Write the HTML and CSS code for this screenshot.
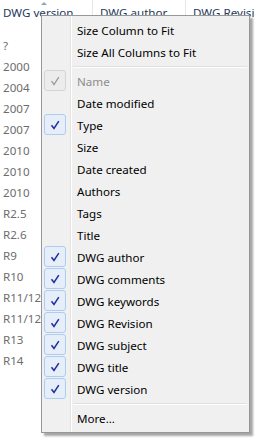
FILE: index.html
```html
<!DOCTYPE html>
<html lang="en">

<head>
  <meta charset="UTF-8">
  <meta name="viewport" content="width=device-width, initial-scale=1.0">
  <title>Column chooser</title>
  <link rel="stylesheet" href="styles.css">
</head>

<body>
  <div class="header">
    <div class="col col-sorted">DWG version<span class="sort-arrow"></span></div>
    <div class="col">DWG author</div>
    <div class="col">DWG Revision</div>
  </div>

  <ul class="rows">
    <li>?</li>
    <li>2000</li>
    <li>2004</li>
    <li>2007</li>
    <li>2007</li>
    <li>2010</li>
    <li>2010</li>
    <li>2010</li>
    <li>R2.5</li>
    <li>R2.6</li>
    <li>R9</li>
    <li>R10</li>
    <li>R11/12</li>
    <li>R11/12</li>
    <li>R13</li>
    <li>R14</li>
  </ul>

  <!-- context menu sits over the list -->
  <div class="menu">
    <div class="item"><span class="gutter"></span><span class="label">Size Column to Fit</span></div>
    <div class="item"><span class="gutter"></span><span class="label">Size All Columns to Fit</span></div>
    <div class="separator"></div>
    <div class="item disabled"><span class="gutter"><span class="check"><svg viewBox="0 0 10 10" width="10" height="10"><path d="M1.5 5.2 L4 8.5 L8.8 1.2" fill="none" stroke="currentColor" stroke-width="1.3"/></svg></span></span><span class="label">Name</span></div>
    <div class="item"><span class="gutter"></span><span class="label">Date modified</span></div>
    <div class="item"><span class="gutter"><span class="check"><svg viewBox="0 0 10 10" width="10" height="10"><path d="M1.5 5.2 L4 8.5 L8.8 1.2" fill="none" stroke="currentColor" stroke-width="1.5"/></svg></span></span><span class="label">Type</span></div>
    <div class="item"><span class="gutter"></span><span class="label">Size</span></div>
    <div class="item"><span class="gutter"></span><span class="label">Date created</span></div>
    <div class="item"><span class="gutter"></span><span class="label">Authors</span></div>
    <div class="item"><span class="gutter"></span><span class="label">Tags</span></div>
    <div class="item"><span class="gutter"></span><span class="label">Title</span></div>
    <div class="item"><span class="gutter"><span class="check"><svg viewBox="0 0 10 10" width="10" height="10"><path d="M1.5 5.2 L4 8.5 L8.8 1.2" fill="none" stroke="currentColor" stroke-width="1.5"/></svg></span></span><span class="label">DWG author</span></div>
    <div class="item"><span class="gutter"><span class="check"><svg viewBox="0 0 10 10" width="10" height="10"><path d="M1.5 5.2 L4 8.5 L8.8 1.2" fill="none" stroke="currentColor" stroke-width="1.5"/></svg></span></span><span class="label">DWG comments</span></div>
    <div class="item"><span class="gutter"><span class="check"><svg viewBox="0 0 10 10" width="10" height="10"><path d="M1.5 5.2 L4 8.5 L8.8 1.2" fill="none" stroke="currentColor" stroke-width="1.5"/></svg></span></span><span class="label">DWG keywords</span></div>
    <div class="item"><span class="gutter"><span class="check"><svg viewBox="0 0 10 10" width="10" height="10"><path d="M1.5 5.2 L4 8.5 L8.8 1.2" fill="none" stroke="currentColor" stroke-width="1.5"/></svg></span></span><span class="label">DWG Revision</span></div>
    <div class="item"><span class="gutter"><span class="check"><svg viewBox="0 0 10 10" width="10" height="10"><path d="M1.5 5.2 L4 8.5 L8.8 1.2" fill="none" stroke="currentColor" stroke-width="1.5"/></svg></span></span><span class="label">DWG subject</span></div>
    <div class="item"><span class="gutter"><span class="check"><svg viewBox="0 0 10 10" width="10" height="10"><path d="M1.5 5.2 L4 8.5 L8.8 1.2" fill="none" stroke="currentColor" stroke-width="1.5"/></svg></span></span><span class="label">DWG title</span></div>
    <div class="item"><span class="gutter"><span class="check"><svg viewBox="0 0 10 10" width="10" height="10"><path d="M1.5 5.2 L4 8.5 L8.8 1.2" fill="none" stroke="currentColor" stroke-width="1.5"/></svg></span></span><span class="label">DWG version</span></div>
    <div class="separator"></div>
    <div class="item"><span class="gutter"></span><span class="label">More...</span></div>
  </div>
</body>

</html>
```

FILE: styles.css
```css
* {
  box-sizing: border-box;
}

body {
  font-family: "Noto Sans", "Open Sans", sans-serif;
  font-size: 11.6px;
  background-color: #ffffff;
  margin: 0;
  overflow: hidden;
}

.header {
  display: flex;
  height: 24px;
}

.header .col {
  position: relative;
  width: 93px;
  flex-shrink: 0;
  padding: 5px 0 0 3px;
  color: #1e395b;
  border-right: 1px solid #e3e8ef;
  white-space: nowrap;
  overflow: hidden;
}

.header .col + .col {
  padding-left: 7px;
}

.header .col:last-child {
  flex: 1;
  border-right: none;
}

.sort-arrow {
  position: absolute;
  top: 2px;
  left: 41px;
  border-left: 3px solid transparent;
  border-right: 3px solid transparent;
  border-bottom: 3px solid #8fa3bd;
}

.rows {
  list-style: none;
  margin: 0;
  padding: 11px 0 0 3px;
}

.rows li {
  height: 21px;
  line-height: 21px;
  color: #6d6d6d;
}

.menu {
  position: absolute;
  top: 15px;
  left: 41px;
  width: 209px;
  padding: 3px 2px 3px 1px;
  background-color: #f0f0f0;
  border: 1px solid #979797;
  box-shadow: 3px 3px 2px rgba(0, 0, 0, 0.35);
  background-image: linear-gradient(to right, transparent 28px, #e2e3e3 28px, #e2e3e3 29px, #ffffff 29px, #ffffff 30px, transparent 30px);
}

.item {
  display: flex;
  align-items: center;
  height: 22px;
  color: #000000;
}

.item .gutter {
  width: 33px;
  height: 22px;
  flex-shrink: 0;
  padding: 0 0 1px 1px;
  display: flex;
  align-items: center;
}

.item .label {
  padding-left: 1px;
  padding-top: 1px;
  white-space: nowrap;
}

.check {
  width: 22px;
  height: 21px;
  display: flex;
  align-items: center;
  justify-content: center;
  border: 1px solid #aeccf1;
  border-radius: 3px;
  background-color: #e6eef9;
  color: #1e2e9c;
}

.disabled .label {
  color: #8d8d8d;
}

.disabled .check {
  border-color: #d4d4d4;
  background-color: #ececec;
  color: #9a9a9a;
}

.separator {
  height: 7px;
  margin-left: 30px;
  background-image: linear-gradient(to bottom, transparent 3px, #e0e0e0 3px, #e0e0e0 4px, #ffffff 4px, #ffffff 5px, transparent 5px);
}
```
